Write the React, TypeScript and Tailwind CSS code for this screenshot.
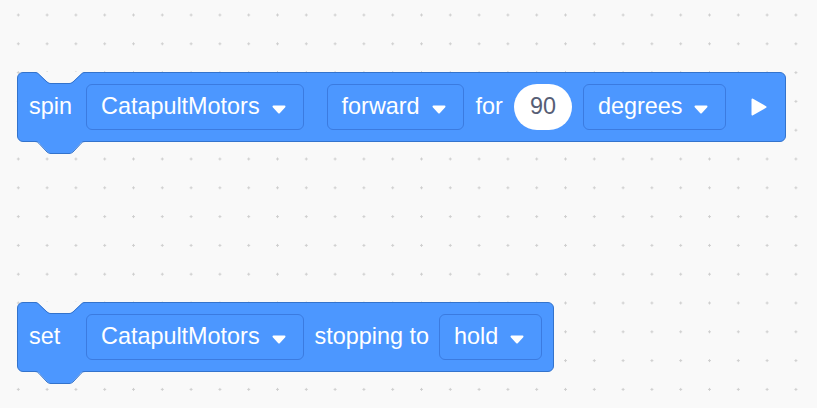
import type { ReactNode } from 'react';

const font = { fontFamily: '"Liberation Sans", Arial, Helvetica, sans-serif' };

function DotGrid() {
  return (
    <svg className="absolute inset-0" width="817" height="408">
      <defs>
        <pattern id="dots" width="28.8" height="28.8" patternUnits="userSpaceOnUse" x="3.9" y="0.6">
          <rect x="12.9" y="13.9" width="3" height="1" fill="#cfcfcf" />
          <rect x="13.9" y="12.9" width="1" height="3" fill="#cfcfcf" />
        </pattern>
      </defs>
      <rect width="100%" height="100%" fill="url(#dots)" />
    </svg>
  );
}

function Caret() {
  return (
    <svg width="14" height="9" viewBox="0 0 14 9" className="mt-[4px] shrink-0">
      <path d="M1.5 1.5 H12.5 L7 7.5 Z" fill="#fff" stroke="#fff" strokeWidth="2" strokeLinejoin="round" />
    </svg>
  );
}

function Dropdown({ value }: { value: string }) {
  return (
    <div className="flex items-center h-[46px] pl-[14px] pr-[17px] gap-[12px] rounded-[6px] border border-[#3b7be0]">
      <span>{value}</span>
      <Caret />
    </div>
  );
}

function Block({ label, children, className = '' }: { label: string; children: ReactNode; className?: string }) {
  return (
    <div
      className={`relative flex items-center h-[70px] bg-[#4c97ff] border border-[#3373cc] rounded-[6px] pl-[11px] text-white text-[23.4px] leading-none ${className}`}
    >
      {/* notch cut into the top edge */}
      <svg className="absolute left-[17px] -top-px" width="52" height="13" viewBox="0 0 52 13">
        <path d="M0 0 C2 0 3 1 4 2 L12 9.5 C13.5 10.5 14 11 16 11 H34 C36 11 36.5 10.5 38 9.5 L46 2 C47 1 48 0 50 0 Z" fill="#f9f9f9" />
        <path d="M0 0.5 C2 0.5 3 1.5 4 2.5 L12 10 C13.5 11 14 11.5 16 11.5 H34 C36 11.5 36.5 11 38 10 L46 2.5 C47 1.5 48 0.5 50 0.5" fill="none" stroke="#3373cc" strokeWidth="1" />
      </svg>
      {/* tab below the bottom edge */}
      <svg className="absolute left-[17px] top-full" width="52" height="14" viewBox="0 0 52 14">
        <path d="M0 0 H50 C48 0 47 1 46 2 L38 10.5 C36.5 11.5 36 12.5 34 12.5 H16 C14 12.5 13.5 11.5 12 10.5 L4 2 C3 1 2 0 0 0 Z" fill="#4c97ff" />
        <path d="M0 0.5 C2 0.5 3 1.5 4 2.5 L12 11 C13.5 12 14 12.5 16 12.5 H34 C36 12.5 36.5 12 38 11 L46 2.5 C47 1.5 48 0.5 50 0.5" fill="none" stroke="#3373cc" strokeWidth="1" />
      </svg>
      <span className="w-[57px] shrink-0">{label}</span>
      {children}
    </div>
  );
}

export default function App() {
  return (
    <div className="relative w-[817px] h-[408px] bg-[#f9f9f9] overflow-hidden" style={font}>
      <DotGrid />
      <div className="relative flex flex-col items-start gap-[160px] pt-[72px] pl-[17px]">
        <Block label="spin" className="pr-[18px]">
          <Dropdown value="CatapultMotors" />
          <div className="ml-[23px]">
            <Dropdown value="forward" />
          </div>
          <span className="ml-[12px]">for</span>
          <div className="ml-[11px] flex items-center justify-center w-[58px] h-[46px] rounded-full bg-white text-[#575e75]">
            90
          </div>
          <div className="ml-[11px]">
            <Dropdown value="degrees" />
          </div>
          <svg width="16" height="18" viewBox="0 0 16 18" className="ml-[25px] shrink-0">
            <path d="M1.5 1.5 L14.5 9 L1.5 16.5 Z" fill="#fff" stroke="#fff" strokeWidth="2" strokeLinejoin="round" />
          </svg>
        </Block>

        <Block label="set" className="pr-[11px]">
          <Dropdown value="CatapultMotors" />
          <span className="ml-[11px]">stopping to</span>
          <div className="ml-[10px]">
            <Dropdown value="hold" />
          </div>
        </Block>
      </div>
    </div>
  );
}
